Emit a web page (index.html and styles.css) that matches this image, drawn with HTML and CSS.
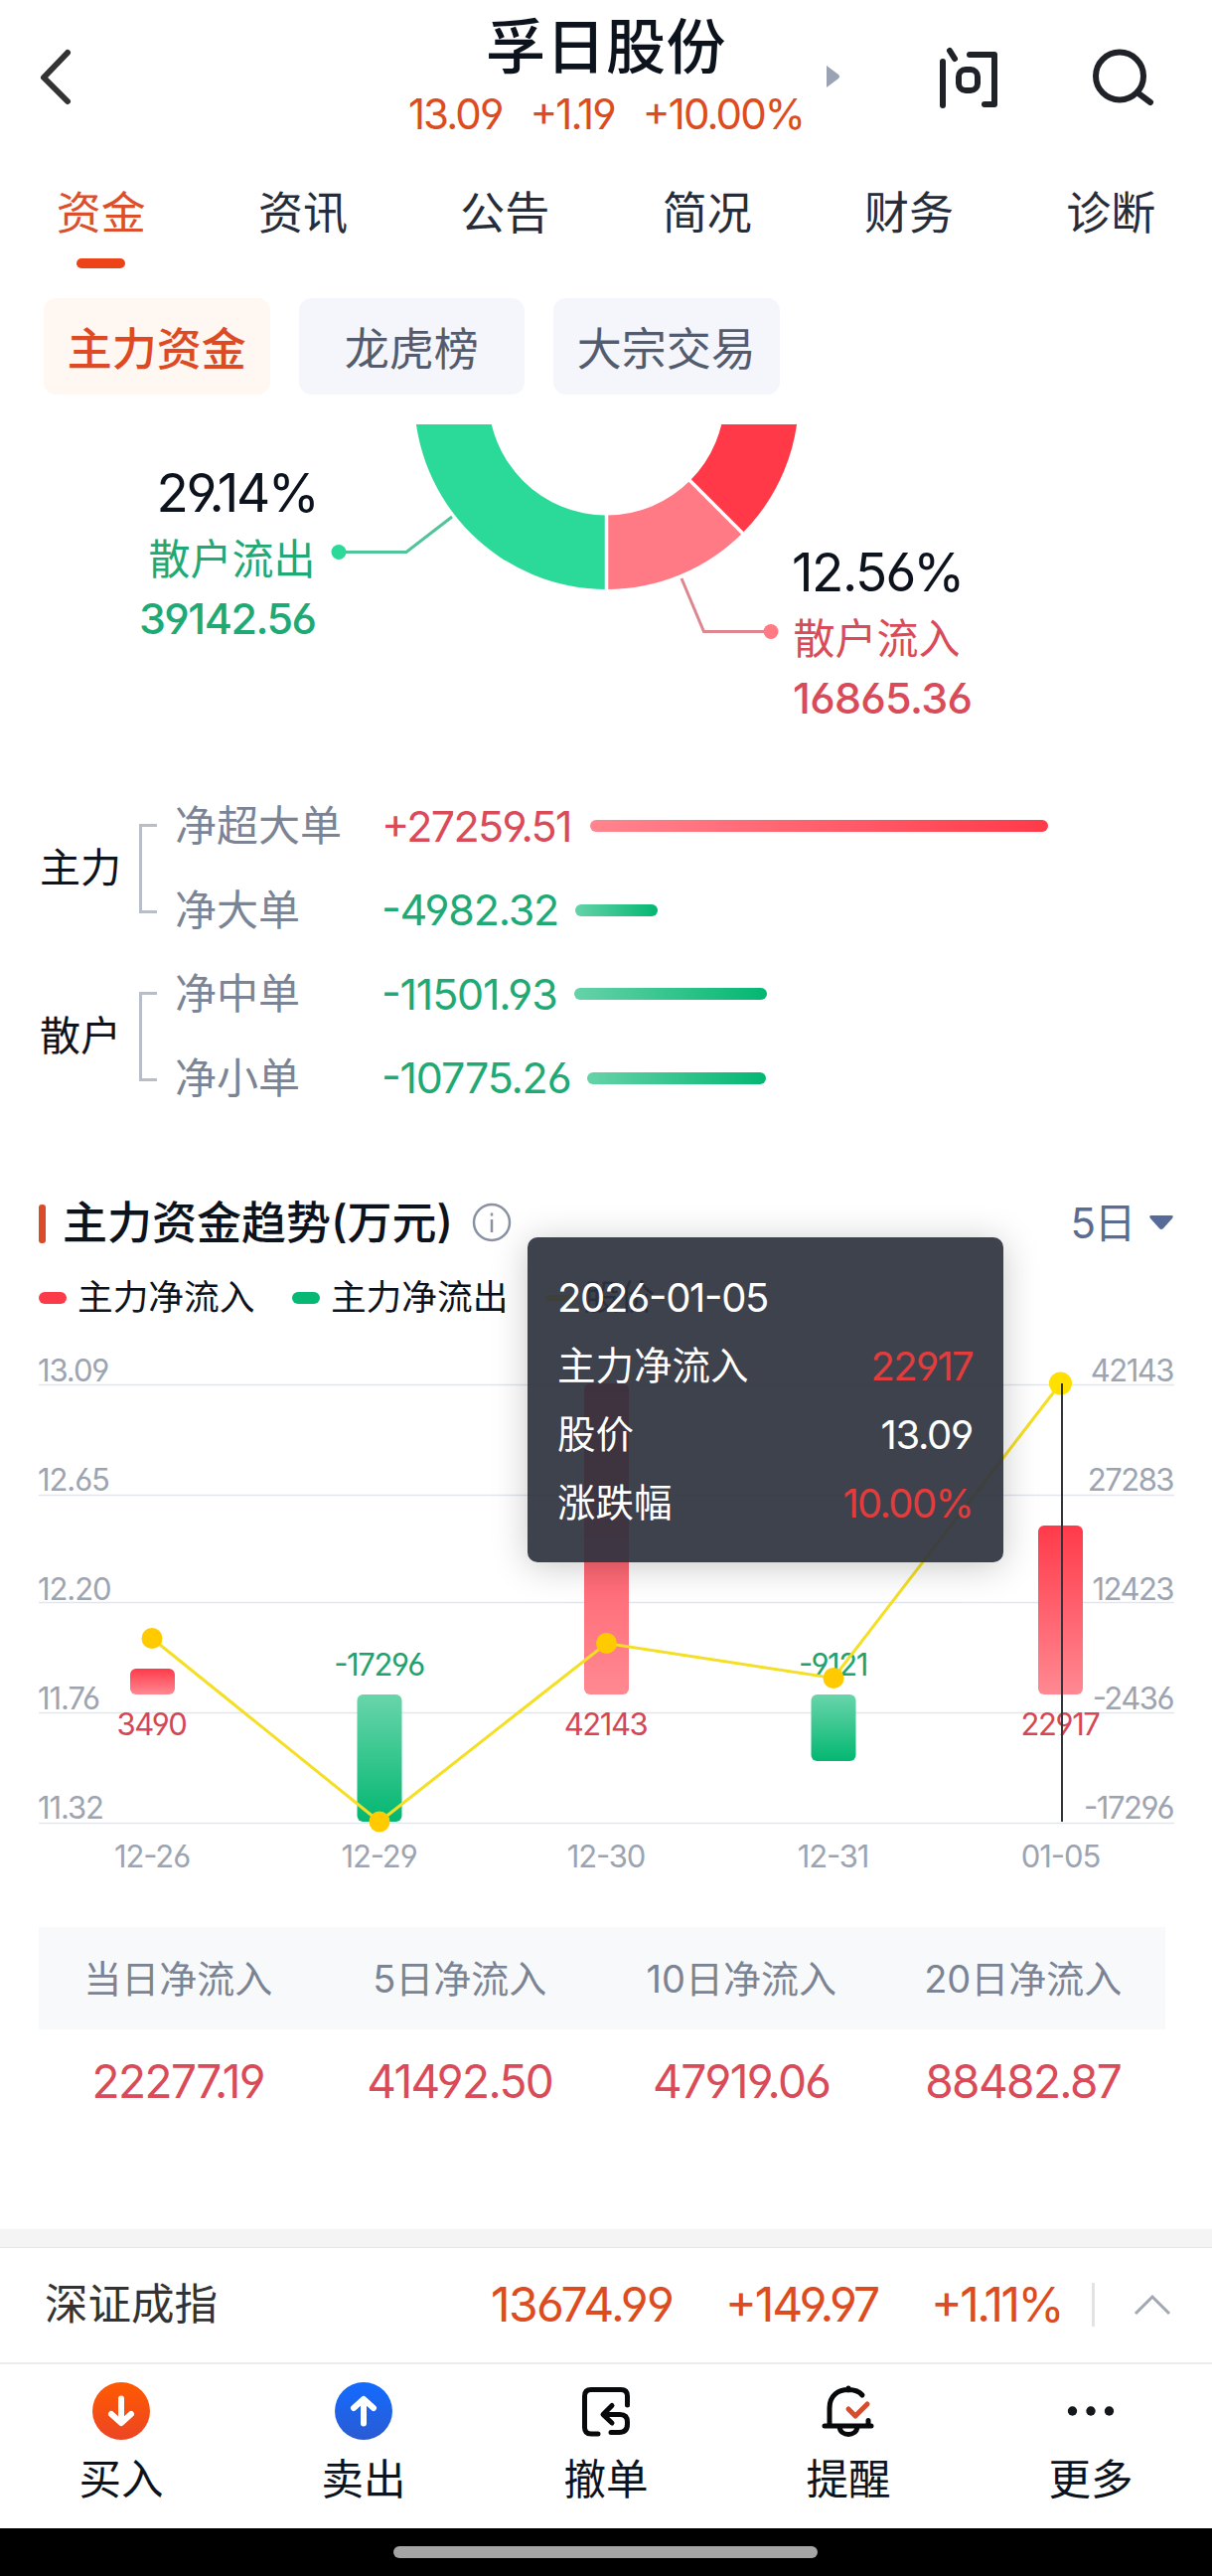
FILE: index.html
```
<!DOCTYPE html>
<html lang="zh-CN">
<head>
  <meta charset="UTF-8">
  <title>孚日股份</title>
  <link rel="stylesheet" href="styles.css">
</head>
<body>
<div class="page">
  <header class="header">
    <div class="header-side">
      <svg class="back" width="36" height="60" viewBox="0 0 36 60">
        <path d="M31 6 L7 31 L31 55"/>
      </svg>
    </div>
    <div class="header-main">
      <h1>孚日股份</h1>
      <div class="quote"><span>13.09</span><span>+1.19</span><span>+10.00%</span></div>
    </div>
    <div class="header-side right">
      <svg class="next" width="13" height="22" viewBox="0 0 13 22"><path d="M0 0 L12 9 Q14 11 12 13 L0 22 Z"/></svg>
      <svg class="ask" width="64" height="68" viewBox="0 0 64 68">
        <path d="M6 18 V62 M13 7 L18 15 M33 11 H58 V61 H48"/>
        <rect x="22" y="26" width="19" height="21" rx="7"/>
      </svg>
      <svg class="search" width="66" height="64" viewBox="0 0 66 64">
        <circle cx="31" cy="31.500" r="24"/>
        <path d="M50 49 L62 58"/>
      </svg>
    </div>
  </header>

  <nav class="tabs">
    <a class="active">资金</a>
    <a>资讯</a>
    <a>公告</a>
    <a>简况</a>
    <a>财务</a>
    <a>诊断</a>
  </nav>

  <div class="chips">
    <a class="active">主力资金</a>
    <a>龙虎榜</a>
    <a>大宗交易</a>
  </div>

  <!-- lower half of the ring, the rest is scrolled away -->
  <svg class="donut" width="1220" height="333" viewBox="0 0 1220 333">
    <path fill="#2bd998" d="M417 -27.500 A193.500 193.500 0 0 0 610.500 166 V91.500 A119 119 0 0 1 491.500 -27.500 Z"/>
    <path fill="#ff7a85" d="M610.500 166 A193.500 193.500 0 0 0 747.500 109.200 L694.700 56.500 A119 119 0 0 1 610.500 91.500 Z"/>
    <path fill="#ff3948" d="M747.500 109.200 A193.500 193.500 0 0 0 804 -27.500 H729.500 A119 119 0 0 1 694.700 56.500 Z"/>
    <path class="seam" d="M610.500 88 V170 M692 54 L752 114"/>
    <path class="lead" stroke="#52c49a" d="M341 128.500 H409 L455 93"/>
    <circle cx="341" cy="128.500" r="7.500" fill="#2bd998"/>
    <path class="lead" stroke="#dd868e" d="M776 208.500 H708.500 L686 155"/>
    <circle cx="776" cy="208.500" r="7.500" fill="#ff7a85"/>
    <g class="out">
      <text class="pct" x="319.500" y="88">29.14%</text>
      <text class="name" x="317.500" y="151">散户流出</text>
      <text class="val" x="317.500" y="211">39142.56</text>
    </g>
    <g class="in">
      <text class="pct" x="797" y="168">12.56%</text>
      <text class="name" x="798.500" y="231">散户流入</text>
      <text class="val" x="798" y="291">16865.36</text>
    </g>
  </svg>

  <section class="orders">
    <div class="group">
      <b>主力</b>
      <i class="bracket"></i>
      <ul>
        <li><span class="label">净超大单</span><span class="num red">+27259.51</span><i class="bar red" style="width:461px"></i></li>
        <li><span class="label">净大单</span><span class="num green">-4982.32</span><i class="bar green" style="width:83px"></i></li>
      </ul>
    </div>
    <div class="group">
      <b>散户</b>
      <i class="bracket"></i>
      <ul>
        <li><span class="label">净中单</span><span class="num green">-11501.93</span><i class="bar green" style="width:194px"></i></li>
        <li><span class="label">净小单</span><span class="num green">-10775.26</span><i class="bar green" style="width:180px"></i></li>
      </ul>
    </div>
  </section>

  <section class="trend">
    <div class="trend-head">
      <h2>主力资金趋势(万元)</h2>
      <svg class="info" width="40" height="40" viewBox="0 0 40 40">
        <circle cx="20" cy="20" r="18"/>
        <path d="M20 17 V30 M20 10.500 V13.500"/>
      </svg>
      <span class="range">5日</span>
      <svg class="caret" width="24" height="14" viewBox="0 0 24 14"><path d="M2 0 H22 Q25 0 23 3 L14 13 Q12 15 10 13 L1 3 Q-1 0 2 0 Z"/></svg>
    </div>
    <div class="legend">
      <span><i class="pill red"></i>主力净流入</span>
      <span><i class="pill green"></i>主力净流出</span>
      <span><i class="pill yellow"></i>股价</span>
    </div>

    <svg class="chart" width="1220" height="550" viewBox="0 0 1220 550">
      <defs>
        <linearGradient id="up" x1="0" y1="0" x2="0" y2="1">
          <stop offset="0" stop-color="#ff3a4a"/><stop offset="1" stop-color="#ff8992"/>
        </linearGradient>
        <linearGradient id="down" x1="0" y1="0" x2="0" y2="1">
          <stop offset="0" stop-color="#69d5ab"/><stop offset="1" stop-color="#03b771"/>
        </linearGradient>
      </defs>
      <path class="grid" d="M39 43.500 H1182 M39 154.500 H1182 M39 262.500 H1182 M39 373.500 H1182 M39 484.500 H1182"/>
      <g class="axis">
        <text x="38" y="39.500">13.09</text>
        <text x="38" y="149.500">12.65</text>
        <text x="38" y="259.500">12.20</text>
        <text x="38" y="369.500">11.76</text>
        <text x="38" y="480">11.32</text>
      </g>
      <g class="axis end">
        <text x="1181" y="39.500">42143</text>
        <text x="1181" y="149.500">27283</text>
        <text x="1181" y="259.500">12423</text>
        <text x="1181" y="369.500">-2436</text>
        <text x="1181" y="480">-17296</text>
      </g>
      <rect x="131" y="329" width="45" height="26" rx="6" fill="url(#up)"/>
      <rect x="359.500" y="355" width="45" height="128" rx="6" fill="url(#down)"/>
      <rect x="588" y="42" width="45" height="313" rx="6" fill="url(#up)"/>
      <rect x="816.500" y="355" width="45" height="67" rx="6" fill="url(#down)"/>
      <rect x="1045" y="185" width="45" height="170" rx="6" fill="url(#up)"/>
      <g class="value">
        <text class="red" x="152.500" y="396">3490</text>
        <text class="green" x="381.500" y="336">-17296</text>
        <text class="red" x="609.500" y="396">42143</text>
        <text class="green" x="838.500" y="336">-9121</text>
        <text class="red" x="1067" y="396">22917</text>
      </g>
      <polyline class="price" points="153,298.500 382,483 610.500,303.500 839,338.500 1067.500,42"/>
      <g fill="#ffcb00">
        <circle cx="153" cy="298.500" r="10.500"/>
        <circle cx="382" cy="483" r="10.500"/>
        <circle cx="610.500" cy="303.500" r="10.500"/>
        <circle cx="839" cy="338.500" r="10.500"/>
        <circle cx="1067.500" cy="42" r="11.500" fill="#ffe000"/>
      </g>
      <path class="cursor" d="M1069 42 V483"/>
      <g class="axis dates">
        <text x="153" y="529">12-26</text>
        <text x="381.500" y="529">12-29</text>
        <text x="610" y="529">12-30</text>
        <text x="838.500" y="529">12-31</text>
        <text x="1067.500" y="529">01-05</text>
      </g>
    </svg>

    <div class="tooltip">
      <div><em>2026-01-05</em></div>
      <div><span>主力净流入</span><em class="hot">22917</em></div>
      <div><span>股价</span><em>13.09</em></div>
      <div><span>涨跌幅</span><em class="hot">10.00%</em></div>
    </div>
  </section>

  <table class="totals">
    <tr><th>当日净流入</th><th>5日净流入</th><th>10日净流入</th><th>20日净流入</th></tr>
    <tr><td>22277.19</td><td>41492.50</td><td>47919.06</td><td>88482.87</td></tr>
  </table>

  <div class="index">
    <span class="index-name">深证成指</span>
    <span class="n1">13674.99</span>
    <span class="n2">+149.97</span>
    <span class="n3">+1.11%</span>
    <i></i>
    <svg width="38" height="22" viewBox="0 0 38 22"><path d="M2 20 L19 3 L36 20"/></svg>
  </div>

  <nav class="actions">
    <a>
      <svg width="60" height="60" viewBox="0 0 60 60">
        <defs>
          <linearGradient id="buy" x1="0" y1="0" x2="0" y2="1"><stop offset="0" stop-color="#ff5a00"/><stop offset="1" stop-color="#ec4525"/></linearGradient>
        </defs>
        <circle cx="30" cy="30" r="29" fill="url(#buy)"/>
        <path class="arrow" d="M30 17.500 V41 M20 33 L30 42 L40 33"/>
      </svg>
      买入
    </a>
    <a>
      <svg width="60" height="60" viewBox="0 0 60 60">
        <defs>
          <linearGradient id="sell" x1="0" y1="0" x2="0" y2="1"><stop offset="0" stop-color="#126bff"/><stop offset="1" stop-color="#2b5bd3"/></linearGradient>
        </defs>
        <circle cx="30" cy="30" r="29" fill="url(#sell)"/>
        <path class="arrow" d="M30 42.500 V19 M20 27 L30 18 L40 27"/>
      </svg>
      卖出
    </a>
    <a>
      <svg class="line" width="60" height="60" viewBox="0 0 60 60">
        <path d="M22 53 H15 Q8.500 53 8.500 46.500 V15 Q8.500 8.500 15 8.500 H45 Q51.500 8.500 51.500 15 V24 M35 51.500 H43 Q51.500 51.500 51.500 43 V41 Q51.500 33.500 44 33.500 H28 M36 24.500 L27 33.500 L36 42"/>
      </svg>
      撤单
    </a>
    <a>
      <svg class="line bell" width="60" height="60" viewBox="0 0 60 60">
        <path d="M11 44 V27 C11 14 20 8.500 30 8.500 C36 8.500 41 10.500 44 14 M30 7 V9 M6 45 H53 M50 39.500 V44 M21 46 C22 56 38 56 39 46"/>
        <path class="tick" d="M30 28 L37 35 L49 23"/>
      </svg>
      提醒
    </a>
    <a>
      <svg width="60" height="60" viewBox="0 0 60 60" fill="#14171c">
        <circle cx="11.500" cy="30" r="4.700"/><circle cx="30" cy="30" r="4.700"/><circle cx="48.500" cy="30" r="4.700"/>
      </svg>
      更多
    </a>
  </nav>
  <footer class="home"><i></i></footer>
</div>
</body>
</html>
```
FILE: styles.css
```
* { box-sizing: border-box; }

body {
  margin: 0;
  background: #fff;
  color: #0d131d;
  font-family: Inter, "Noto Sans CJK SC", sans-serif;
  font-feature-settings: "cv03", "cv04", "case";
  line-height: 1;
}

svg { display: block; flex: none; }
i, em { font-style: normal; }
h1, h2, ul { margin: 0; padding: 0; }
h1, h2 { font-weight: 500; }

.page { width: 1220px; height: 2592px; overflow: hidden; }

/* header */
.header { display: flex; height: 152px; }
.header-side { width: 400px; padding: 47px 0 0 37px; }
.header-side.right { display: flex; width: 400px; padding: 0; }
.header-main { width: 420px; padding-top: 16px; text-align: center; }
.header h1 { font-size: 60px; line-height: 62px; letter-spacing: 0.5px; }
.quote {
  display: flex;
  justify-content: center;
  gap: 28px;
  margin-top: 16px;
  color: #dc4c20;
  font-size: 42px;
  line-height: 42px;
  letter-spacing: -1.900px;
}
.back { fill: none; stroke: #333; stroke-width: 6; stroke-linecap: round; stroke-linejoin: round; }
.next { margin: 66px 0 0 12px; fill: #9aa2b4; }
.ask { margin: 44px 0 0 98px; fill: none; stroke: #1f2226; stroke-width: 6; stroke-linecap: round; stroke-linejoin: round; }
.search { margin: 45px 0 0 89px; fill: none; stroke: #1f2226; stroke-width: 6; stroke-linecap: round; }

/* tabs */
.tabs { display: grid; grid-template-columns: repeat(6, 1fr); height: 122px; }
.tabs a {
  display: flex;
  flex-direction: column;
  align-items: center;
  padding-top: 33px;
  color: #262d3a;
  font-size: 45px;
  line-height: 60px;
}
.tabs .active { color: #dc4f2c; }
.tabs .active::after { content: ""; width: 49px; height: 10px; margin-top: 15px; border-radius: 5px; background: #ed4319; }

.chips { display: flex; gap: 29px; margin: 26px 44px 30px; }
.chips a {
  width: 227.5px;
  height: 97px;
  border-radius: 13px;
  background: #f4f6fb;
  color: #535c6f;
  font-size: 45px;
  line-height: 104px;
  text-align: center;
}
.chips .active { background: #fff7f2; color: #dd4a24; font-weight: 500; }

/* ring chart */
.seam { stroke: #fff; stroke-width: 3.5; }
.lead { fill: none; stroke-width: 3; }
.pct { fill: #0d131d; font-size: 53px; letter-spacing: -2.400px; }
.name { font-size: 42px; }
.val { font-size: 43px; font-weight: 500; letter-spacing: -1.500px; }
.out { fill: #1fa975; text-anchor: end; }
.in { fill: #d94b58; }
.in .pct { letter-spacing: -1.500px; }
.in .val { letter-spacing: -0.700px; }

/* net orders */
.orders { padding: 29px 0 0 40px; }
.group { display: flex; align-items: center; height: 169px; }
.group b { width: 100px; font-size: 41px; font-weight: 400; }
.bracket { width: 18px; height: 90px; border: 3px solid #b8bdc7; border-right: 0; }
.group ul { list-style: none; margin-left: 18px; }
.group li { display: flex; align-items: center; height: 84.5px; }
.label { width: 208px; color: #7b8494; font-size: 42px; }
.num { font-size: 43px; }
.num.red { color: #d94b58; letter-spacing: -1.700px; }
.num.green { color: #1fa975; letter-spacing: -1.200px; }
.bar { height: 12px; margin-left: 19px; border-radius: 6px; }
.bar.red { background: linear-gradient(90deg, #ff858f, #ff3a4a); }
.bar.green { margin-left: 17px; background: linear-gradient(90deg, #66d2a9, #03b771); }

/* trend */
.trend { position: relative; padding-top: 73px; }
.trend-head { display: flex; align-items: center; height: 60px; padding: 0 39px; }
.trend-head h2 { font-size: 45px; }
.trend-head h2::before {
  content: "";
  display: inline-block;
  width: 7px;
  height: 39px;
  margin-right: 17px;
  border-radius: 3px;
  background: #d84c29;
  vertical-align: -4px;
}
.info { margin-left: 19px; fill: none; stroke: #8a92a2; stroke-width: 2.5; }
.range { margin-left: auto; padding-top: 2px; color: #5b6c92; font-size: 42px; letter-spacing: -1.500px; }
.caret { margin-left: 15px; fill: #576b99; }
.legend { display: flex; gap: 37.5px; height: 90px; padding: 1px 0 0 39px; font-size: 35.7px; }
.legend span { display: flex; align-items: center; }
.pill { width: 28px; height: 12px; margin-right: 11px; border-radius: 6px; }
.pill.red { background: #fb3a4a; }
.pill.green { background: #06b873; }
.pill.yellow { height: 6px; background: #ffe000; }

.grid { stroke: #e3e5ed; stroke-width: 1.500; }
.axis { fill: #9da4b1; font-size: 31px; letter-spacing: -1.100px; }
.end { text-anchor: end; letter-spacing: -1.500px; }
.dates, .value { text-anchor: middle; }
.value { font-size: 31px; letter-spacing: -1.400px; }
.value .red { fill: #d54752; }
.value .green { fill: #1fa26d; }
.price { fill: none; stroke: #f5df24; stroke-width: 3; }
.cursor { stroke: #33333b; stroke-width: 2; }

.tooltip {
  position: absolute;
  left: 531px;
  top: 118px;
  width: 479px;
  height: 327px;
  padding: 26px 31px 26px 30px;
  border-radius: 10px;
  background: rgba(46, 50, 62, 0.92);
  box-shadow: 0 4px 36px rgba(0, 0, 0, 0.22);
  color: #fff;
  font-size: 38.5px;
}
.tooltip div { display: flex; justify-content: space-between; align-items: center; height: 69px; }
.tooltip em { font-size: 40px; letter-spacing: -1.300px; }
.tooltip .hot { color: #e23c3c; letter-spacing: -1.700px; }

/* totals */
.totals { width: 1134px; margin: 39px 0 97px 39px; border-collapse: collapse; table-layout: fixed; text-align: center; }
.totals th, .totals td { height: 104px; padding: 0 3px 0 0; }
.totals th { height: 103px; background: #f8f9fb; color: #7b8494; font-size: 38px; font-weight: 400; }
.totals td { color: #d94b58; font-size: 46px; letter-spacing: -1.600px; }

/* market index */
.index {
  display: flex;
  align-items: center;
  height: 136px;
  padding: 0 41px 0 45px;
  border-top: 18px solid #f4f4f4;
  border-bottom: 2px solid #ececee;
  box-shadow: inset 0 1px #e6e6e6;
  color: #dc4c20;
  font-size: 48px;
  letter-spacing: -1.600px;
}
.index-name { width: 449px; color: #333; font-size: 43.5px; letter-spacing: 0; }
.n1 { width: 236px; }
.n2 { width: 207px; letter-spacing: -2px; }
.n3 { width: 162px; letter-spacing: -2.500px; }
.index i { width: 3px; height: 44px; background: #e1e4e6; }
.index svg { margin-left: auto; fill: none; stroke: #a0a6b2; stroke-width: 3; }

/* bottom actions */
.actions { display: grid; grid-template-columns: repeat(5, 1fr); height: 165px; padding-top: 17px; }
.actions a { display: flex; flex-direction: column; align-items: center; font-size: 42.5px; line-height: 77px; }
.arrow { fill: none; stroke: #fff; stroke-width: 6; stroke-linecap: round; stroke-linejoin: round; }
.line { fill: none; stroke: #08090b; stroke-width: 5; stroke-linecap: round; stroke-linejoin: round; }
.tick { stroke: #d84c2e; }

.home { display: flex; align-items: center; justify-content: center; height: 48px; padding-right: 1px; background: #000; }
.home i { width: 427px; height: 12px; border-radius: 6px; background: #a5a5a5; }
```
